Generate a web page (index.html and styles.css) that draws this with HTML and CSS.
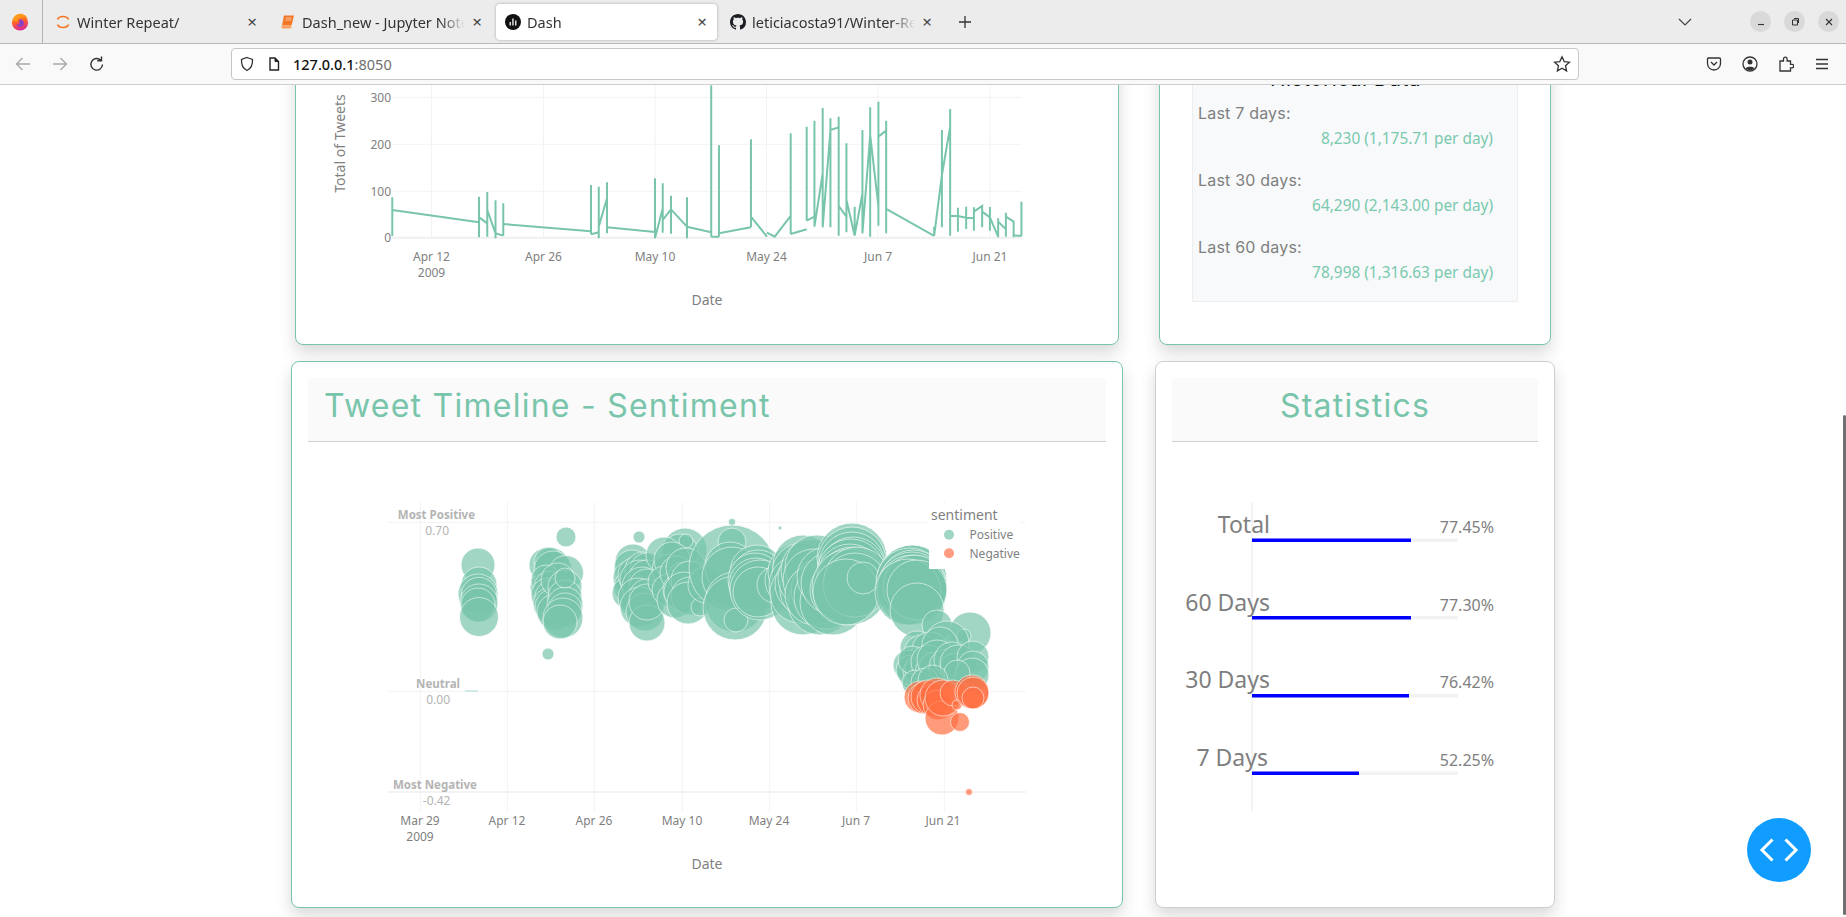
FILE: index.html
```html
<!DOCTYPE html>
<html lang="en">
<head>
<meta charset="utf-8">
<title>Dash</title>
<link rel="stylesheet" href="styles.css">
</head>
<body>
<div class="window">
  <header class="tabbar">
    <div class="fx-slot">
      <svg class="ico18" viewBox="0 0 16 16"><defs><linearGradient id="fxg" x1=".3" y1="0" x2=".6" y2="1"><stop offset="0" stop-color="#ffb000"/><stop offset=".5" stop-color="#ff5a32"/><stop offset="1" stop-color="#d6249f"/></linearGradient></defs><circle cx="8" cy="8.400" r="7.200" fill="url(#fxg)"/><path d="M8 5.500a3.400 3.400 0 1 1-3.300 4.300c.9.8 2.200.9 3 .4C6.800 9.500 6.800 8.300 7.500 7.600c-.4-.8-.2-1.500.5-2.100z" fill="#8a3fc8"/><path d="M2 5c1-2.500 3-4 6-4.400 3.500-.2 6 2 7 5-1.500-2-3.500-2.600-5-2.400C7 3.600 5 5.500 5.500 8 4 7.500 3 6.500 2 5z" fill="#ff9a1f"/></svg>
    </div>
    <div class="tabs">
      <div class="tab">
        <svg class="ico16" viewBox="0 0 16 16"><path d="M2.500 5.500C4 1.500 12 1.500 13.500 5.500M2.500 10.500C4 14.500 12 14.500 13.500 10.500" fill="none" stroke="#f37626" stroke-width="1.700"/></svg>
        <span class="tab-title">Winter Repeat/</span><span class="tab-x">×</span>
      </div>
      <div class="tab">
        <svg class="ico16" viewBox="0 0 16 16"><path d="M4 1.500h10l-2.500 10H2z" fill="#f37626"/><path d="M5.800 4h5.800M5.300 6h5.800" stroke="#fbd3b0" stroke-width=".9"/><path d="M2 11.500h9.500L11 14.500H2.500C1.200 14.500 1.200 11.500 2 11.500z" fill="#f9a15f"/></svg>
        <span class="tab-title">Dash_new - Jupyter Notebook</span><span class="tab-x">×</span>
      </div>
      <div class="tab tab-active">
        <svg class="ico16" viewBox="0 0 16 16"><circle cx="8" cy="8" r="8" fill="#111"/><path d="M4.500 11.500V8h1.500v3.500zM7.200 11.500V4.500h1.500v7zM10 11.500V6.500h1.500v5z" fill="#ddd"/></svg>
        <span class="tab-title">Dash</span><span class="tab-x">×</span>
      </div>
      <div class="tab">
        <svg class="ico16" viewBox="0 0 16 16"><path fill="#1b1f23" d="M8 0C3.580 0 0 3.580 0 8c0 3.540 2.290 6.530 5.470 7.590.4.070.55-.17.55-.38 0-.19-.01-.82-.01-1.490-2.010.37-2.530-.49-2.690-.94-.09-.23-.48-.94-.82-1.130-.28-.15-.68-.52-.01-.53.63-.01 1.080.58 1.230.82.72 1.210 1.870.87 2.330.66.070-.52.28-.87.51-1.070-1.780-.2-3.640-.89-3.640-3.950 0-.87.31-1.590.82-2.150-.08-.2-.36-1.020.08-2.120 0 0 .67-.21 2.200.82.64-.18 1.320-.27 2-.27.68 0 1.360.09 2 .27 1.530-1.040 2.200-.82 2.200-.82.44 1.100.16 1.920.08 2.120.51.56.82 1.270.82 2.150 0 3.070-1.870 3.750-3.650 3.950.29.25.54.73.54 1.480 0 1.070-.01 1.930-.01 2.200 0 .21.15.46.55.38A8.013 8.013 0 0 0 16 8c0-4.420-3.580-8-8-8z"/></svg>
        <span class="tab-title">leticiacosta91/Winter-Repeat</span><span class="tab-x">×</span>
      </div>
      <svg class="ico-plus" viewBox="0 0 14 14"><path d="M7 1v12M1 7h12" stroke="#333" stroke-width="1.300" fill="none"/></svg>
    </div>
    <div class="win-controls">
      <svg class="ico-chev" viewBox="0 0 14 8"><path d="M1 1l6 6 6-6" stroke="#444" stroke-width="1.200" fill="none"/></svg>
      <span class="win-btn"><svg viewBox="0 0 10 10"><path d="M2 7.500h6" stroke="#333" stroke-width="1.100"/></svg></span>
      <span class="win-btn"><svg viewBox="0 0 10 10"><path d="M2.500 3h5v5h-5zM4 1.500h4.500V6" stroke="#333" fill="none"/></svg></span>
      <span class="win-btn"><svg viewBox="0 0 10 10"><path d="M2 2l6 6M8 2l-6 6" stroke="#333" stroke-width="1.100"/></svg></span>
    </div>
  </header>

  <nav class="toolbar">
    <svg class="ico18" viewBox="0 0 18 18"><path d="M16 9H2.500M8.500 3l-6 6 6 6" fill="none" stroke="#a8a8a8" stroke-width="1.300"/></svg>
    <svg class="ico18" viewBox="0 0 18 18"><path d="M2 9h13.500M9.500 3l6 6-6 6" fill="none" stroke="#a8a8a8" stroke-width="1.300"/></svg>
    <svg class="ico18" viewBox="0 0 18 18"><path d="M14.500 9.500a5.800 5.800 0 1 1-1.700-4.300M13.500 1.500v4.200H9.300" fill="none" stroke="#333" stroke-width="1.400"/></svg>
    <div class="urlbar">
      <svg class="ico16" viewBox="0 0 16 16"><path d="M8 1.500l5.500 2c.3 5-1.500 9-5.500 11-4-2-5.800-6-5.500-11z" fill="none" stroke="#333" stroke-width="1.300"/></svg>
      <svg class="ico16" viewBox="0 0 16 16"><path d="M4 2h5l3.500 3.500V14H4z" fill="none" stroke="#222" stroke-width="1.400"/><path d="M9 2v3.500h3.500" fill="#222" stroke="#222"/></svg>
      <span class="url"><b class="url-host">127.0.0.1</b>:8050</span>
      <svg class="ico-star" viewBox="0 0 18 18"><path d="M9 1.800l2.200 4.800 5.200.6-3.900 3.500 1.100 5.200L9 13.300l-4.600 2.600 1.100-5.200L1.600 7.200l5.200-.6z" fill="none" stroke="#333" stroke-width="1.300"/></svg>
    </div>
    <div class="tools">
      <svg class="ico16" viewBox="0 0 16 16"><path d="M2.500 2h11c.6 0 1 .4 1 1v4.500a6.500 6.500 0 0 1-13 0V3c0-.6.4-1 1-1z" fill="none" stroke="#333" stroke-width="1.300"/><path d="M5 6l3 3 3-3" fill="none" stroke="#333" stroke-width="1.300"/></svg>
      <svg class="ico16" viewBox="0 0 16 16"><circle cx="8" cy="8" r="7" fill="none" stroke="#333" stroke-width="1.300"/><circle cx="8" cy="6" r="2.500" fill="#333"/><path d="M3.500 12.500c1-2.500 8-2.500 9 0-2 2.200-7 2.200-9 0z" fill="#333"/></svg>
      <svg class="ico16" viewBox="0 0 16 16"><path d="M2 5h3.500V3a1.800 1.800 0 0 1 3.600 0v2h3.400v3.300h1.500a1.800 1.800 0 0 1 0 3.600h-1.500V15H2z" fill="none" stroke="#333" stroke-width="1.300"/></svg>
      <svg class="ico16" viewBox="0 0 16 16"><path d="M2 3.500h12M2 8h12M2 12.500h12" stroke="#333" stroke-width="1.300"/></svg>
    </div>
  </nav>

  <main class="viewport">
    <div class="page">
      <section class="row row-top">
        <article class="card card-teal card-line">
          <svg class="chart" width="822" height="298" viewBox="296 46 822 298">
            <g class="grid">
              <path d="M431.500 85V238M543.500 85V238M655 85V238M766.500 85V238M878 85V238M990 85V238M392 97.300H1022M392 144.300H1022M392 191.300H1022"/>
            </g>
            <path class="zero" d="M392 237.700H1022"/>
            <g transform="translate(290 80) scale(.4847 .3333)">
              <path class="trend" d="M211 352V468M211 390L390 427M390 350V472M390 412L407 430M407 336V470M407 390L424 460M424 361V475M424 460L440 467M440 370V467M440 432L621 454M621 315V463M621 463L637 457M637 320V475M637 440L654 355M654 307V460M654 442L753 456M753 295V475M753 475L769 385M769 310V458M769 420L786 388M786 347V461M786 388L819 440M819 352V475M819 440L869 457M869 16V470M869 470H885M885 196V470M885 460L951 442"/>
              <path class="trend" d="M951 178V442M951 410L984 470M984 458L1000 470L1033 408M1033 160V462M1033 462L1066 448M1066 140V422M1066 422L1082 410M1082 122V440M1082 440L1099 280M1099 84V442M1099 442L1115 150M1115 115V442M1115 150L1132 142M1132 110V467M1132 378L1148 410M1148 190V457M1148 360L1165 467M1165 380V467M1165 467L1181 340M1181 150V460M1181 460L1197 165M1197 82V470M1197 165L1214 380M1214 65V437M1214 170L1230 152M1230 122V460M1230 387L1329 468M1329 440V468M1329 468L1345 285M1345 150V442M1345 285L1362 140M1362 87V467M1362 408H1378M1378 383V455M1378 408L1395 413M1395 380V447M1395 414H1411M1411 382V452M1411 395L1428 378V442M1428 395L1444 412M1444 381V452M1444 412L1461 470M1461 415V472M1461 425L1477 448M1477 398V470M1477 410L1493 425M1493 422V472M1493 466L1509 468M1509 365V468"/>
            </g>
            <g class="tick tick-end">
              <text x="391" y="101.500">300</text><text x="391" y="148.500">200</text><text x="391" y="195.500">100</text><text x="391" y="242">0</text>
            </g>
            <g class="tick tick-mid">
              <text x="431.500" y="261">Apr 12</text><text x="431.500" y="277">2009</text><text x="543.500" y="261">Apr 26</text><text x="655" y="261">May 10</text><text x="766.500" y="261">May 24</text><text x="878" y="261">Jun 7</text><text x="990" y="261">Jun 21</text>
            </g>
            <text class="axis-title" x="707" y="305">Date</text>
            <text class="axis-title" transform="translate(345 143.500) rotate(-90)">Total of Tweets</text>
          </svg>
        </article>
        <article class="card card-teal card-hist">
          <div class="hist-box">
            <h3 class="hist-title">Historical Data</h3>
            <div class="hist-row"><div class="hist-label">Last 7 days:</div><div class="hist-value">8,230 (1,175.71 per day)</div></div>
            <div class="hist-row"><div class="hist-label">Last 30 days:</div><div class="hist-value">64,290 (2,143.00 per day)</div></div>
            <div class="hist-row"><div class="hist-label">Last 60 days:</div><div class="hist-value">78,998 (1,316.63 per day)</div></div>
          </div>
        </article>
      </section>

      <section class="row row-bottom">
        <article class="card card-teal card-wide">
          <h2 class="card-head card-head-left">Tweet Timeline - Sentiment</h2>
          <svg class="chart" width="798" height="449" viewBox="308 442 798 449">
            <g class="grid">
              <path d="M420.300 502V812M507.300 502V812M594.300 502V812M682.300 502V812M769.300 502V812M856.300 502V812M944.300 502V812M388 522.300H1026M388 691.300H1026"/>
            </g>
            <path class="zero-thin" d="M388 792H1026"/>
            <g class="bub-pos">
              <circle cx="478" cy="565" r="17"/><circle cx="479" cy="585" r="18"/><circle cx="478" cy="594" r="20"/><circle cx="479" cy="595" r="17.700"/><circle cx="479" cy="603" r="19"/><circle cx="478" cy="605" r="17"/><circle cx="479" cy="617" r="19.500"/>
              <circle cx="566" cy="537" r="10"/><circle cx="548" cy="654" r="6"/><circle cx="546" cy="565" r="17"/><circle cx="552" cy="565" r="17"/><circle cx="549" cy="562" r="15"/><circle cx="553" cy="570" r="19"/><circle cx="566" cy="573" r="17.500"/><circle cx="543" cy="587" r="13"/><circle cx="546" cy="580" r="15"/><circle cx="550" cy="587" r="16"/><circle cx="548" cy="595" r="17"/><circle cx="552" cy="597" r="17"/><circle cx="549" cy="604" r="16"/><circle cx="553" cy="607" r="18"/><circle cx="555" cy="612" r="18"/><circle cx="558" cy="580" r="17"/><circle cx="565" cy="587" r="17"/><circle cx="565" cy="597" r="17"/><circle cx="565" cy="605" r="18"/><circle cx="565" cy="610" r="17"/><circle cx="563" cy="618" r="20"/><circle cx="560" cy="622" r="17"/><circle cx="565" cy="578" r="10"/>
              <circle cx="639" cy="537" r="6"/><circle cx="633" cy="562" r="18"/><circle cx="632" cy="568" r="18"/><circle cx="630" cy="578" r="17"/><circle cx="632" cy="587" r="18"/><circle cx="628" cy="593" r="16"/><circle cx="636" cy="575" r="18"/><circle cx="643" cy="570" r="18"/><circle cx="647" cy="570" r="17"/><circle cx="640" cy="580" r="20"/><circle cx="647" cy="578" r="18"/><circle cx="642" cy="587" r="20"/><circle cx="647" cy="587" r="18"/><circle cx="638" cy="598" r="20"/><circle cx="647" cy="597" r="18"/><circle cx="640" cy="607" r="20"/><circle cx="645" cy="612" r="19"/><circle cx="647" cy="623" r="18"/><circle cx="647" cy="602" r="18"/>
              <circle cx="685" cy="550" r="22"/><circle cx="680" cy="552" r="18"/><circle cx="686" cy="541" r="7"/><circle cx="664" cy="555" r="18"/><circle cx="668" cy="570" r="16"/><circle cx="672" cy="560" r="18"/><circle cx="664" cy="582" r="16"/><circle cx="668" cy="590" r="16"/><circle cx="675" cy="600" r="18"/><circle cx="677" cy="573" r="17"/><circle cx="680" cy="590" r="17"/><circle cx="683" cy="577" r="15"/><circle cx="686" cy="568" r="20"/><circle cx="690" cy="580" r="19"/><circle cx="684" cy="592" r="20"/><circle cx="690" cy="596" r="19"/><circle cx="688" cy="603" r="21"/><circle cx="700" cy="607" r="9"/><circle cx="706" cy="585" r="18"/>
              <circle cx="732" cy="522" r="3.700"/><circle cx="780" cy="528" r="2"/><circle cx="732" cy="568" r="43"/><circle cx="732" cy="542" r="14"/><circle cx="730" cy="567" r="25"/><circle cx="732" cy="577" r="30"/><circle cx="735" cy="602" r="30"/><circle cx="735" cy="608" r="32"/><circle cx="736" cy="620" r="12"/><circle cx="757" cy="572" r="27"/><circle cx="758" cy="577" r="27"/><circle cx="755" cy="580" r="27"/><circle cx="756" cy="585" r="27"/><circle cx="760" cy="590" r="30"/><circle cx="758" cy="592" r="25"/><circle cx="775" cy="585" r="18"/>
              <circle cx="791" cy="580" r="26"/><circle cx="796" cy="572" r="28"/><circle cx="803" cy="565" r="30"/><circle cx="802" cy="573" r="30"/><circle cx="798" cy="585" r="29"/><circle cx="803" cy="603" r="32"/><circle cx="800" cy="593" r="30"/><circle cx="806" cy="584" r="31"/><circle cx="810" cy="590" r="30"/><circle cx="808" cy="578" r="30"/><circle cx="812" cy="570" r="31"/><circle cx="817" cy="567" r="32"/><circle cx="814" cy="580" r="31"/><circle cx="820" cy="603" r="32"/><circle cx="823" cy="590" r="32"/><circle cx="815" cy="595" r="30"/><circle cx="826" cy="597" r="32"/><circle cx="833" cy="602" r="33"/><circle cx="827" cy="577" r="30"/><circle cx="832" cy="583" r="31"/><circle cx="840" cy="590" r="30"/><circle cx="852" cy="558" r="35"/><circle cx="852" cy="561" r="34"/><circle cx="852" cy="565" r="33"/><circle cx="853" cy="570" r="33"/><circle cx="851" cy="573" r="34"/><circle cx="850" cy="577" r="33"/><circle cx="852" cy="582" r="35"/><circle cx="850" cy="587" r="38"/><circle cx="857" cy="580" r="33"/><circle cx="855" cy="585" r="32"/><circle cx="846" cy="592" r="33"/><circle cx="863" cy="578" r="16"/>
              <circle cx="913" cy="578" r="33"/><circle cx="912" cy="580" r="35"/><circle cx="910" cy="582" r="34"/><circle cx="913" cy="583" r="33"/><circle cx="912" cy="586" r="34"/><circle cx="912" cy="590" r="35"/><circle cx="915" cy="587" r="32"/><circle cx="908" cy="592" r="33"/><circle cx="917" cy="590" r="30"/><circle cx="917" cy="610" r="27"/>
              <circle cx="937" cy="625" r="15"/><circle cx="970" cy="633" r="21"/><circle cx="964" cy="636" r="7"/><circle cx="947" cy="643" r="22"/><circle cx="917" cy="648" r="17"/><circle cx="922" cy="653" r="18"/><circle cx="930" cy="650" r="18"/><circle cx="940" cy="645" r="18"/><circle cx="917" cy="665" r="17"/><circle cx="915" cy="673" r="17"/><circle cx="908" cy="665" r="15"/><circle cx="911" cy="670" r="15"/><circle cx="919" cy="672" r="16"/><circle cx="923" cy="670" r="18"/><circle cx="927" cy="668" r="16"/><circle cx="912" cy="660" r="14"/><circle cx="928" cy="662" r="17"/><circle cx="931" cy="672" r="16"/><circle cx="935" cy="668" r="16"/><circle cx="937" cy="660" r="20"/><circle cx="943" cy="672" r="15"/><circle cx="947" cy="667" r="18"/><circle cx="952" cy="660" r="18"/><circle cx="955" cy="668" r="15"/><circle cx="958" cy="663" r="18"/><circle cx="973" cy="657" r="16"/><circle cx="973" cy="667" r="16"/><circle cx="972" cy="675" r="17"/><circle cx="957" cy="673" r="13"/><circle cx="915" cy="683" r="13"/><circle cx="925" cy="682" r="14"/><circle cx="933" cy="680" r="15"/>
            </g>
            <g class="bub-neg">
              <circle cx="920" cy="697" r="16"/><circle cx="924" cy="698" r="16"/><circle cx="928" cy="697" r="17"/><circle cx="933" cy="700" r="16"/><circle cx="937" cy="695" r="17"/><circle cx="938" cy="705" r="15"/><circle cx="942" cy="718" r="17"/><circle cx="943" cy="698" r="18"/><circle cx="953" cy="693" r="13"/><circle cx="957" cy="705" r="5"/><circle cx="972" cy="692" r="17"/><circle cx="973" cy="693" r="16"/><circle cx="973" cy="698" r="11"/><circle cx="960" cy="722" r="9.500"/><circle cx="969" cy="792" r="3.500"/>
            </g>
            <rect class="legend-bg" x="929" y="505" width="92" height="64"/>
            <text class="legend-title" x="931" y="520">sentiment</text>
            <circle class="legend-pos" cx="949" cy="534.700" r="5"/>
            <text class="legend-text" x="969.500" y="539">Positive</text>
            <circle class="legend-neg" cx="949" cy="553.300" r="5"/>
            <text class="legend-text" x="969.500" y="557.500">Negative</text>
            <g class="sent-label">
              <text x="475" y="518.500">Most Positive</text><text x="460" y="687.500">Neutral</text><text x="477" y="788.500">Most Negative</text>
            </g>
            <path class="neutral-dash" d="M465 691H478"/>
            <g class="sent-value">
              <text x="449" y="535">0.70</text><text x="450" y="704">0.00</text><text x="450.500" y="805">-0.42</text>
            </g>
            <g class="tick tick-mid">
              <text x="420" y="825">Mar 29</text><text x="420" y="841">2009</text><text x="507" y="825">Apr 12</text><text x="594" y="825">Apr 26</text><text x="682" y="825">May 10</text><text x="769" y="825">May 24</text><text x="856" y="825">Jun 7</text><text x="943" y="825">Jun 21</text>
            </g>
            <text class="axis-title" x="707" y="869">Date</text>
          </svg>
        </article>
        <article class="card card-grey card-narrow">
          <h2 class="card-head">Statistics</h2>
          <svg class="chart" width="366" height="449" viewBox="1172 442 366 449">
            <path class="stat-axis" d="M1252 502V812"/>
            <g class="stat-track">
              <rect x="1252" y="538.500" width="206" height="3.500"/><rect x="1252" y="616" width="206" height="3.500"/><rect x="1252" y="694" width="206" height="3.500"/><rect x="1252" y="771.500" width="206" height="3.500"/>
            </g>
            <g class="stat-fill">
              <rect x="1252" y="538.500" width="159" height="3.500"/><rect x="1252" y="616" width="159" height="3.500"/><rect x="1252" y="694" width="157" height="3.500"/><rect x="1252" y="771.500" width="107" height="3.500"/>
            </g>
            <g class="stat-label">
              <text x="1270" y="533">Total</text><text x="1270" y="611">60 Days</text><text x="1270" y="688">30 Days</text><text x="1268" y="766">7 Days</text>
            </g>
            <g class="stat-pct">
              <text x="1494" y="533">77.45%</text><text x="1494" y="611">77.30%</text><text x="1494" y="688">76.42%</text><text x="1494" y="766">52.25%</text>
            </g>
          </svg>
        </article>
      </section>
    </div>
    <div class="scroll-thumb"></div>
    <button class="fab" type="button" aria-label="Dash debug menu">
      <svg viewBox="0 0 42 24"><path d="M14.500 1.500L4 12l10.500 10.500M27.500 1.500L38 12 27.500 22.500" fill="none" stroke="#fff" stroke-width="3"/></svg>
    </button>
  </main>
</div>
</body>
</html>
```

FILE: styles.css
```css
* { box-sizing: border-box; }
html, body { margin: 0; padding: 0; height: 100%; overflow: hidden; background: #fff; }
body { font-family: "Noto Sans", sans-serif; color: #7f7f7f; }

.window { width: 1846px; height: 917px; display: flex; flex-direction: column; overflow: hidden; }

/* browser chrome */
.tabbar { height: 44px; flex: none; display: flex; align-items: center; background: #ececec; border-bottom: 1px solid #b8b8b8; }
.ico16 { width: 16px; height: 16px; flex: none; display: block; }
.ico18 { width: 18px; height: 18px; flex: none; display: block; }
.fx-slot { width: 43px; height: 43px; flex: none; display: flex; align-items: center; justify-content: center; padding-right: 3px; border-right: 1px solid #b4b4b4; }
.tabs { display: flex; align-items: center; gap: 4px; margin-left: 3px; }
.tab { width: 221px; height: 36px; flex: none; display: flex; align-items: center; gap: 6px; padding: 0 9px; font-size: 14.500px; color: #333; }
.tab-active { background: #fff; border-radius: 4px; box-shadow: 0 0 3px rgba(0,0,0,.3); }
.tab-title { flex: 1; min-width: 0; white-space: nowrap; overflow: hidden; -webkit-mask-image: linear-gradient(90deg, #000 85%, transparent); mask-image: linear-gradient(90deg, #000 85%, transparent); }
.tab-x { width: 12px; flex: none; text-align: center; font-size: 17px; line-height: 1; color: #444; }
.ico-plus { width: 14px; height: 14px; margin-left: 12px; }
.win-controls { margin-left: auto; display: flex; align-items: center; gap: 13px; padding-right: 7px; }
.ico-chev { width: 14px; height: 8px; margin-right: 45px; }
.win-btn { width: 21px; height: 21px; border-radius: 50%; background: #d9d9d9; display: flex; align-items: center; justify-content: center; }
.win-btn svg { width: 10px; height: 10px; }

.toolbar { height: 41px; flex: none; display: flex; align-items: center; gap: 19px; padding: 0 16px 0 14px; background: #f9f9f9; border-bottom: 1px solid #cfcfcf; }
.urlbar { width: 1348px; height: 32px; margin-left: 106px; display: flex; align-items: center; gap: 11px; padding: 0 7px; background: #fff; border: 1px solid #c6c6c6; border-radius: 4px; }
.url { font-size: 14.500px; color: #6f6f6f; flex: 1; }
.url-host { font-weight: 500; color: #111; }
.ico-star { width: 18px; height: 18px; flex: none; }
.tools { margin-left: auto; display: flex; align-items: center; gap: 20px; }

/* page */
.viewport { position: relative; flex: 1; overflow: hidden; background: #fff; }
.page { width: 1264px; margin: -40px 0 0 291px; display: flex; flex-direction: column; gap: 16px; }
.row { display: flex; }
.row-top { padding: 0 4px; gap: 40px; }
.row-bottom { gap: 32px; }
.card { background: #fff; border: 1px solid; border-radius: 8px; box-shadow: 0 8px 16px rgba(0,0,0,.15); }
.card-teal { border-color: #78c5ab; }
.card-grey { border-color: #cfcfcf; }
.card-line { width: 824px; height: 300px; }
.card-hist { width: 392px; height: 300px; padding: 0 32px 42px; }
.card-wide { width: 832px; height: 547px; padding: 16px 16px 0; }
.card-narrow { width: 400px; height: 547px; padding: 16px 16px 0; }
.chart { display: block; }

.card-head { margin: 0; height: 64px; background: #fafafa; border-bottom: 1px solid #cfcfcf; border-radius: 4px 4px 0 0; font-family: Inter, sans-serif; font-weight: 400; font-size: 32px; letter-spacing: 1.250px; line-height: 56px; color: #78c5ab; text-align: center; }
.card-head-left { text-align: left; padding-left: 16px; }

.hist-box { height: 100%; background: #f8f9fa; border: 1px solid #eee; padding: 20px 24px 0 5px; overflow: hidden; }
.hist-title { margin: 0 0 10px; font-family: Inter, sans-serif; font-weight: 400; font-size: 21px; letter-spacing: .4px; line-height: 24px; color: #111; text-align: center; }
.hist-row { margin-bottom: 17px; }
.hist-label { font-family: Inter, sans-serif; font-size: 16px; letter-spacing: .2px; line-height: 25px; color: #7f7f7f; }
.hist-value { font-size: 15.400px; line-height: 25px; color: #78c9ae; text-align: right; }

/* svg chart parts */
.grid path { stroke: #f3f3f3; stroke-width: 1; fill: none; }
.zero { stroke: #efefef; stroke-width: 2; fill: none; }
.zero-thin { stroke: #f3f3f3; stroke-width: 2; fill: none; }
.trend { fill: none; stroke: #78c5ab; stroke-width: 2; vector-effect: non-scaling-stroke; }
.tick text { font-size: 12px; fill: #7f7f7f; }
.tick-end text { text-anchor: end; }
.tick-mid text { text-anchor: middle; }
.axis-title { font-size: 14px; fill: #7f7f7f; text-anchor: middle; }
.bub-pos circle { fill: #78c5ab; stroke: #fff; stroke-width: .8; opacity: .7; }
.bub-neg circle { fill: #ff7043; stroke: #fff; stroke-width: .8; opacity: .7; }
.legend-bg { fill: #fff; }
.legend-title { font-size: 14px; fill: #7f7f7f; }
.legend-text { font-size: 12px; fill: #7f7f7f; }
.legend-pos { fill: #9fd5c3; }
.legend-neg { fill: #ff9b80; }
.sent-label text { font-size: 11.500px; font-weight: 700; fill: #b4b4b4; text-anchor: end; }
.sent-value text { font-size: 12px; fill: #b4b4b4; text-anchor: end; }
.neutral-dash { stroke: #a6dcd8; stroke-width: 1; }
.stat-axis { stroke: #f0f0f0; stroke-width: 1.500; }
.stat-track rect { fill: #f2f2f2; }
.stat-fill rect { fill: #0000ff; }
.stat-label text { font-size: 23px; fill: #7f7f7f; text-anchor: end; }
.stat-pct text { font-size: 16px; fill: #7f7f7f; text-anchor: end; }

/* overlays */
.scroll-thumb { position: absolute; right: 0; top: 330px; width: 3px; height: 500px; background: #707070; border-radius: 2px; }
.fab { position: absolute; left: 1747px; top: 733px; width: 64px; height: 64px; padding: 0; border: 0; border-radius: 50%; background: #119dff; display: flex; align-items: center; justify-content: center; }
.fab svg { width: 42px; height: 24px; }
```
